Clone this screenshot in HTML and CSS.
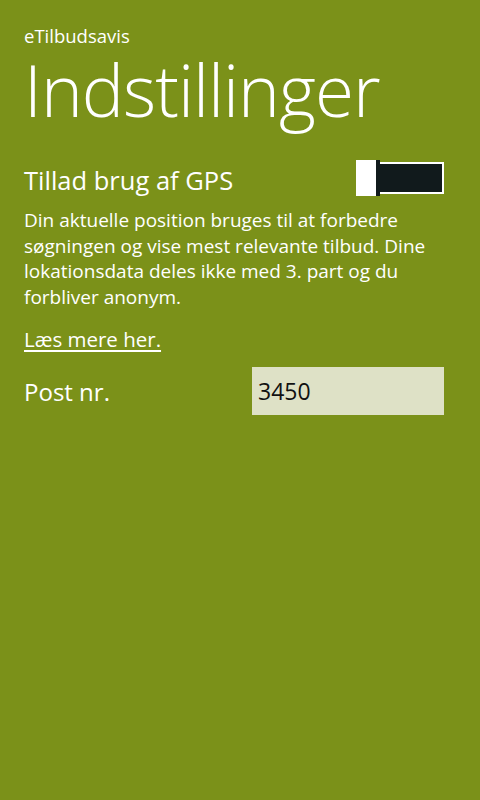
FILE: index.html
```html
<!DOCTYPE html>
<html lang="da">
<head>
<meta charset="utf-8">
<link rel="stylesheet" href="styles.css">
</head>
<body>
<div class="page">
  <div class="app-title">eTilbudsavis</div>
  <h1 class="page-title">Indstillinger</h1>
  <div class="setting-row">
    <div class="setting-label">Tillad brug af GPS</div>
    <div class="toggle"><div class="toggle-track"></div><div class="toggle-thumb"></div></div>
  </div>
  <p class="desc">Din aktuelle position bruges til at forbedre søgningen og vise mest relevante tilbud. Dine lokationsdata deles ikke med 3. part og du forbliver anonym.</p>
  <a class="link" href="#">Læs mere her.</a>
  <div class="post-row">
    <div class="post-label">Post nr.</div>
    <div class="post-input">3450</div>
  </div>
</div>
</body>
</html>
```
FILE: styles.css
```css
html, body {
  margin: 0;
  padding: 0;
  background: #7b9119;
  width: 480px;
  height: 800px;
  overflow: hidden;
}
.page {
  padding: 0 36px 0 24px;
  color: #fff;
  font-family: "Open Sans", "Noto Sans", sans-serif;
}
.app-title {
  font-size: 18.5px;
  line-height: 24px;
  padding-top: 24px;
}
.page-title {
  margin: 6px 0;
  font-weight: 300;
  font-size: 71px;
  line-height: 72px;
  letter-spacing: -1px;
}
.setting-row {
  display: flex;
  justify-content: space-between;
  align-items: flex-start;
  margin-top: 34px;
}
.setting-label {
  font-size: 25.5px;
  line-height: 36px;
  padding-top: 2px;
}
.toggle {
  position: relative;
  width: 88px;
  height: 36px;
}
.toggle-track {
  position: absolute;
  left: 20px;
  top: 2px;
  right: 0;
  bottom: 2px;
  background: #111a1c;
  border: 2px solid #fff;
}
.toggle-thumb {
  position: absolute;
  left: 0;
  top: 0;
  width: 20px;
  height: 36px;
  background: #fff;
  border-right: 4px solid #111a1c;
}
.desc {
  margin: 10px 0 0;
  width: 420px;
  font-size: 19px;
  line-height: 25.6px;
}
.link {
  display: inline-block;
  margin-top: 17px;
  color: #fff;
  font-size: 20.5px;
  line-height: 24px;
  text-decoration: underline;
  text-underline-offset: 3px;
}
.post-row {
  display: flex;
  justify-content: space-between;
  align-items: center;
  margin-top: 15px;
}
.post-label {
  font-size: 24px;
}
.post-input {
  width: 192px;
  height: 48px;
  box-sizing: border-box;
  background: #dee1c6;
  color: #111;
  font-size: 23px;
  line-height: 48px;
  padding-left: 6px;
}
```
